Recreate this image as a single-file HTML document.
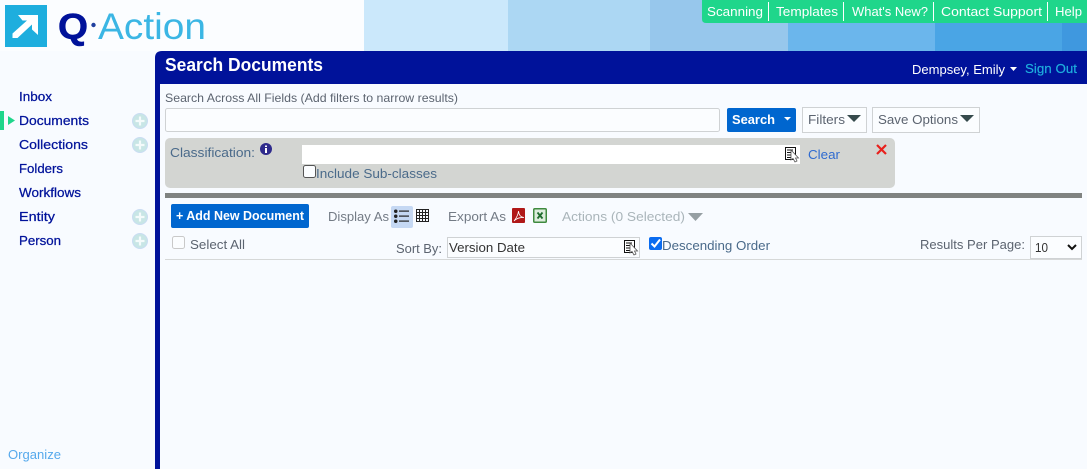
<!DOCTYPE html>
<html><head><meta charset="utf-8"><title>Search Documents</title>
<style>
html,body{margin:0;padding:0;background:#f8fbff;width:1087px;height:469px;overflow:hidden}
svg{display:block;position:absolute;left:0;top:0}
text{font-family:"Liberation Sans",sans-serif;font-size:13px;white-space:pre}
.n{fill:#00129a;stroke:#00129a;stroke-width:.25}
.g{fill:#5c6470}
.w{fill:#fff}
.b{fill:#fff;font-weight:bold}
</style></head><body>
<svg width="1087" height="469" viewBox="0 0 1087 469" xmlns="http://www.w3.org/2000/svg">
<defs>
<g id="plus"><circle cx="0" cy="0" r="7.500" fill="#c8e6e6" stroke="#c9dcf2" stroke-width="1"/><path d="M-4.500 0H4.500M0-4.500V4.500" stroke="#f4fbfb" stroke-width="2.200"/></g>
<g id="pick"><rect x="0.500" y="0.500" width="10" height="12" fill="#fff" stroke="#111"/><path d="M2 3H8M2 5.500H6M2 8H6M2 10.500H6" stroke="#111"/><path d="M6 3L6 13L8 11.500L10 15L12 14L10.500 11H13.500Z" fill="#fff" stroke="#555" stroke-width=".8"/></g>
</defs>

<!-- header bands -->
<rect x="0" y="0" width="1087" height="51" fill="#fbfdff"/>
<rect x="364" y="0" width="144" height="51" fill="#cbe8fb"/>
<rect x="508" y="0" width="142" height="51" fill="#acd7f3"/>
<rect x="650" y="0" width="138" height="51" fill="#97c7ec"/>
<rect x="788" y="0" width="147" height="51" fill="#6bb6ec"/>
<rect x="935" y="0" width="127" height="51" fill="#4aa5e5"/>
<rect x="1062" y="0" width="25" height="51" fill="#3f98df"/>

<!-- logo -->
<rect x="5" y="5" width="42" height="42" fill="#1eaede"/>
<path d="M18 15H38V35L32 29.500V24.500L17.500 38H12.500V33.500L27 20.500H22.500Z" fill="#fff"/>
<text x="58" y="39" style="font-size:36px;font-weight:bold;stroke:#00129a;stroke-width:.6" fill="#00129a" textLength="30" lengthAdjust="spacingAndGlyphs">Q</text>
<circle cx="93.500" cy="25" r="2.200" fill="#1f3f9f"/>
<text x="98" y="39" style="font-size:37px" fill="#3bb6e4" textLength="108" lengthAdjust="spacingAndGlyphs">Action</text>

<!-- top nav -->
<path d="M702 0H1087V23H706Q702 23 702 19Z" fill="#1fd68b"/>
<g fill="#fff">
<rect x="768" y="2" width="1" height="19"/><rect x="843" y="2" width="1" height="19"/><rect x="933" y="2" width="1" height="19"/><rect x="1047" y="2" width="1" height="19"/>
</g>
<text class="w" x="707" y="16" textLength="56" lengthAdjust="spacingAndGlyphs">Scanning</text>
<text class="w" x="776" y="16" textLength="62" lengthAdjust="spacingAndGlyphs">Templates</text>
<text class="w" x="852" y="16" textLength="76" lengthAdjust="spacingAndGlyphs">What's New?</text>
<text class="w" x="941" y="16" textLength="101" lengthAdjust="spacingAndGlyphs">Contact Support</text>
<text class="w" x="1055" y="16" textLength="27" lengthAdjust="spacingAndGlyphs">Help</text>

<!-- main frame -->
<path d="M155 469V58Q155 51 162 51H1087V84H160V469Z" fill="#00129a"/>
<text class="b" x="165" y="71" style="font-size:18px" textLength="158" lengthAdjust="spacingAndGlyphs">Search Documents</text>
<text class="w" x="912" y="74" textLength="93" lengthAdjust="spacingAndGlyphs">Dempsey, Emily</text>
<path d="M1010 67H1017L1013.500 71Z" fill="#fff"/>
<text x="1025" y="73" fill="#1eaede" style="stroke:#1eaede;stroke-width:.2" textLength="52" lengthAdjust="spacingAndGlyphs">Sign Out</text>

<!-- left nav -->
<text class="n" x="19" y="101" textLength="33" lengthAdjust="spacingAndGlyphs">Inbox</text>
<rect x="0" y="111" width="4" height="19" fill="#1fd68b"/>
<path d="M8 116L15 120.500L8 125Z" fill="#1fd68b"/>
<text class="n" x="19" y="125" textLength="70" lengthAdjust="spacingAndGlyphs">Documents</text>
<text class="n" x="19" y="149" textLength="69" lengthAdjust="spacingAndGlyphs">Collections</text>
<text class="n" x="19" y="173" textLength="44" lengthAdjust="spacingAndGlyphs">Folders</text>
<text class="n" x="19" y="197" textLength="62" lengthAdjust="spacingAndGlyphs">Workflows</text>
<text class="n" x="19" y="221" textLength="36" lengthAdjust="spacingAndGlyphs">Entity</text>
<text class="n" x="19" y="245" textLength="42" lengthAdjust="spacingAndGlyphs">Person</text>
<use href="#plus" x="140" y="121"/>
<use href="#plus" x="140" y="145"/>
<use href="#plus" x="140" y="217"/>
<use href="#plus" x="140" y="241"/>
<text x="8" y="459" fill="#56a9ec" textLength="53" lengthAdjust="spacingAndGlyphs">Organize</text>

<!-- search row -->
<text class="g" x="165" y="102" style="font-size:12px" textLength="293" lengthAdjust="spacingAndGlyphs">Search Across All Fields (Add filters to narrow results)</text>
<rect x="165.500" y="108.500" width="554" height="23" rx="2" fill="#fbfdff" stroke="#cfd2d4"/>
<rect x="727" y="108" width="69" height="24" rx="2" fill="#0066cf"/>
<text class="b" x="732" y="124" textLength="43" lengthAdjust="spacingAndGlyphs">Search</text>
<path d="M784 117H791L787.500 120.500Z" fill="#fff"/>
<rect x="802.500" y="107.500" width="64" height="25" fill="#fbfdff" stroke="#cfd2d4"/>
<text class="g" x="808" y="124" textLength="37" lengthAdjust="spacingAndGlyphs">Filters</text>
<path d="M847 115H861L854 122Z" fill="#354a4c"/>
<rect x="872.500" y="107.500" width="107" height="25" fill="#fbfdff" stroke="#cfd2d4"/>
<text class="g" x="878" y="124" textLength="80" lengthAdjust="spacingAndGlyphs">Save Options</text>
<path d="M960 115H974L967 122Z" fill="#354a4c"/>

<!-- classification -->
<rect x="165" y="138" width="730" height="50" rx="5" fill="#d3d5d2"/>
<text x="170" y="157" fill="#4a6a8a" textLength="85" lengthAdjust="spacingAndGlyphs">Classification:</text>
<circle cx="266" cy="149" r="6" fill="#2e2a8c"/>
<rect x="265" y="148" width="2" height="5" fill="#fff"/><rect x="265" y="145.500" width="2" height="1.500" fill="#fff"/>
<rect x="302" y="145" width="498" height="19" fill="#fff"/>
<use href="#pick" x="785" y="147"/>
<text x="808" y="159" fill="#2f6bd0" textLength="32" lengthAdjust="spacingAndGlyphs">Clear</text>
<path d="M877 145L886 154M886 145L877 154" stroke="#e8201c" stroke-width="2.200"/>
<rect x="303.500" y="165.500" width="12" height="12" rx="2" fill="#fbfdff" stroke="#555"/>
<text x="316" y="178" fill="#4a6a8a" textLength="121" lengthAdjust="spacingAndGlyphs">Include Sub-classes</text>

<rect x="165" y="193" width="917" height="5" fill="#808381"/>

<!-- toolbar -->
<rect x="171" y="204" width="138" height="24" rx="2" fill="#0066cf"/>
<text class="b" x="176" y="220" textLength="128" lengthAdjust="spacingAndGlyphs">+ Add New Document</text>
<text class="g" x="328" y="221" fill-opacity=".85" textLength="61" lengthAdjust="spacingAndGlyphs">Display As</text>
<rect x="391" y="206" width="22" height="22" rx="2" fill="#c5d8f3"/>
<g fill="#222"><rect x="394" y="209.500" width="3.500" height="3.500" rx="1.700"/><rect x="394" y="214.500" width="3.500" height="3.500" rx="1.700"/><rect x="394" y="219.500" width="3.500" height="3.500" rx="1.700"/>
<rect x="399" y="210.500" width="10" height="1.200"/><rect x="399" y="215.500" width="10" height="1.200"/><rect x="399" y="220.500" width="10" height="1.200"/></g>
<path d="M416.500 209.500H428.500V221.500H416.500ZM419.500 209.500V221.500M422.500 209.500V221.500M425.500 209.500V221.500M416.500 212.500H428.500M416.500 215.500H428.500M416.500 218.500H428.500" fill="none" stroke="#222"/>
<text class="g" x="448" y="221" fill-opacity=".85" textLength="58" lengthAdjust="spacingAndGlyphs">Export As</text>
<rect x="512" y="208" width="13" height="15" rx="1" fill="#b01818"/>
<path d="M514 221Q518 216 518.500 211Q519 217 524 217.500Q518 217 514 221Z" fill="none" stroke="#fff" stroke-width=".8"/>
<rect x="533.750" y="208.750" width="12.500" height="13.500" rx="1" fill="#dcecdc" stroke="#3f8a3f" stroke-width="1.500"/>
<path d="M537.500 212.500L542.500 218.500M542.500 212.500L537.500 218.500" stroke="#1d6b2d" stroke-width="1.800"/>
<text x="562" y="221" fill="#aab5ba" textLength="123" lengthAdjust="spacingAndGlyphs">Actions (0 Selected)</text>
<path d="M688 213H703L695.500 221Z" fill="#969fa3"/>

<!-- row 2 -->
<rect x="172.500" y="236.500" width="12" height="12" rx="2" fill="#fbfdff" stroke="#c9c9c9"/>
<text class="g" x="190" y="249" textLength="55" lengthAdjust="spacingAndGlyphs">Select All</text>
<text class="g" x="396" y="253" textLength="46" lengthAdjust="spacingAndGlyphs">Sort By:</text>
<rect x="447.500" y="237.500" width="192" height="20" fill="#fbfdff" stroke="#cfd2d4"/>
<text x="449" y="252" fill="#333" textLength="76" lengthAdjust="spacingAndGlyphs">Version Date</text>
<use href="#pick" x="624" y="240"/>
<rect x="649" y="237" width="13" height="13" rx="2" fill="#0a6cf0"/>
<path d="M651.500 243.500L654.500 246.500L660 239.500" fill="none" stroke="#fff" stroke-width="2"/>
<text x="662" y="250" fill="#4a6a8a" textLength="108" lengthAdjust="spacingAndGlyphs">Descending Order</text>
<text class="g" x="920" y="249" textLength="105" lengthAdjust="spacingAndGlyphs">Results Per Page:</text>
<rect x="1030.500" y="236.500" width="51" height="22" fill="#fbfdff" stroke="#cfd2d4"/>
<text x="1035" y="252" fill="#333" textLength="13" lengthAdjust="spacingAndGlyphs">10</text>
<path d="M1068 245L1072 249L1076 245" fill="none" stroke="#111" stroke-width="2"/>
<rect x="165" y="259" width="917" height="1" fill="#d6d8d8"/>
</svg>
</body></html>
